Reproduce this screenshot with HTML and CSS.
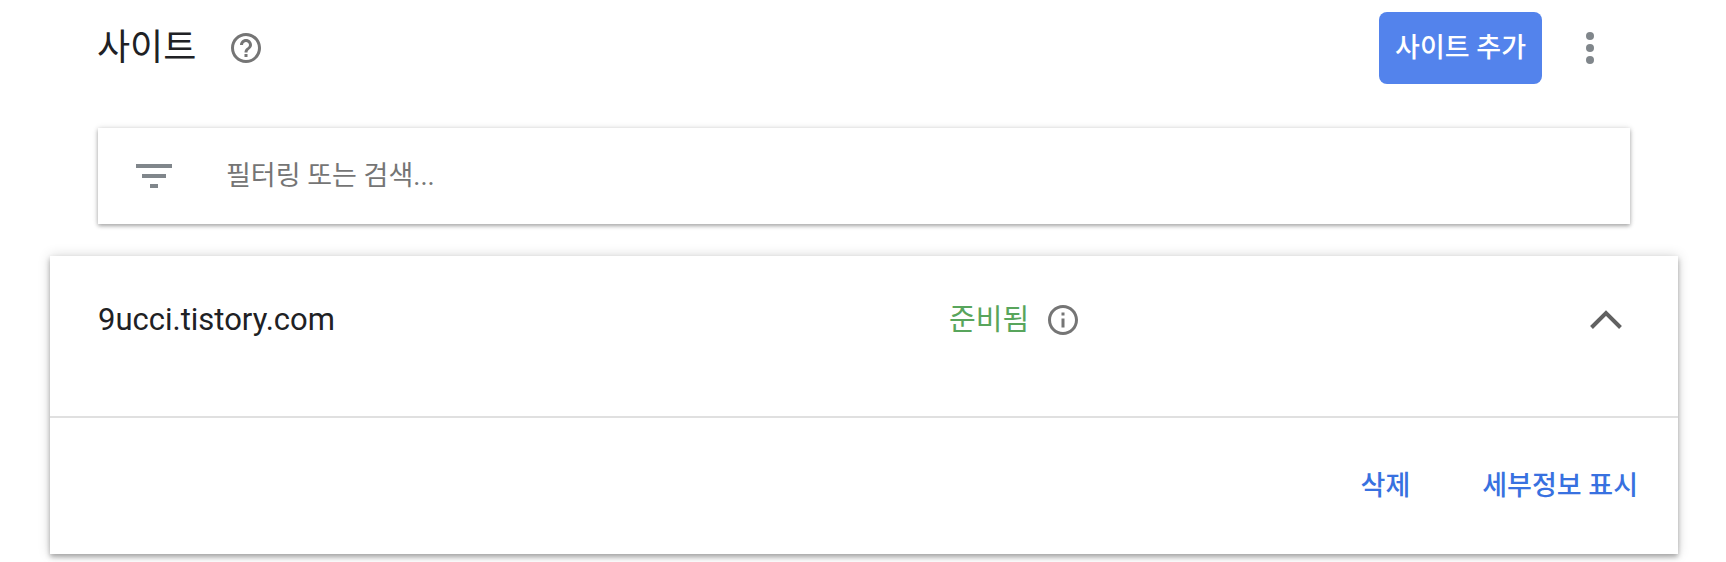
FILE: index.html
```html
<!DOCTYPE html>
<html lang="ko">
<head>
<meta charset="utf-8">
<meta name="viewport" content="width=device-width, initial-scale=1">
<title>사이트</title>
<link rel="stylesheet" href="styles.css">
</head>
<body>
<main class="page">
  <header class="header">
    <h1 class="title">사이트</h1>
    <button class="icon-button" type="button" aria-label="도움말">
      <svg class="icon icon-small" viewBox="0 0 24 24" aria-hidden="true"><path d="M11 18h2v-2h-2v2zm1-16C6.480 2 2 6.480 2 12s4.480 10 10 10 10-4.480 10-10S17.520 2 12 2zm0 18c-4.410 0-8-3.590-8-8s3.590-8 8-8 8 3.590 8 8-3.590 8-8 8zm0-14c-2.210 0-4 1.790-4 4h2c0-1.100.9-2 2-2s2 .9 2 2c0 2-3 1.750-3 5h2c0-2.250 3-2.500 3-5 0-2.210-1.790-4-4-4z"/></svg>
    </button>
    <div class="header-actions">
      <button class="add-button" type="button">사이트 추가</button>
      <button class="icon-button more" type="button" aria-label="더보기">
        <svg class="icon icon-large" viewBox="0 0 24 24" aria-hidden="true"><circle cx="12" cy="6" r="2"/><circle cx="12" cy="12" r="2"/><circle cx="12" cy="18" r="2"/></svg>
      </button>
    </div>
  </header>

  <label class="search">
    <svg class="icon icon-large more" viewBox="0 0 24 24" aria-hidden="true"><path d="M10 18h4v-2h-4v2zM3 6v2h18V6H3zm3 7h12v-2H6v2z"/></svg>
    <input class="search-input" type="text" placeholder="필터링 또는 검색..." aria-label="필터링 또는 검색">
  </label>

  <section class="card">
    <div class="site">
      <span class="domain">9ucci.tistory.com</span>
      <div class="status">
        <span class="status-text">준비됨</span>
        <button class="icon-button" type="button" aria-label="상태 정보">
          <svg class="icon icon-small" viewBox="0 0 24 24" aria-hidden="true"><path d="M11 7h2v2h-2zM11 11h2v6h-2zM12 2C6.480 2 2 6.480 2 12s4.480 10 10 10 10-4.480 10-10S17.520 2 12 2zm0 18c-4.410 0-8-3.590-8-8s3.590-8 8-8 8 3.590 8 8-3.590 8-8 8z"/></svg>
        </button>
        <button class="icon-button toggle" type="button" aria-label="접기" aria-expanded="true">
          <svg class="icon icon-large chevron" viewBox="0 0 48 48" aria-hidden="true"><path d="M9.500 31.500 24 17l14.500 14.500"/></svg>
        </button>
      </div>
    </div>
    <div class="actions">
      <button class="text-button" type="button">삭제</button>
      <button class="text-button" type="button">세부정보 표시</button>
    </div>
  </section>
</main>
</body>
</html>
```
FILE: styles.css
```css
* {
  box-sizing: border-box;
}

body {
  margin: 0;
  background: #fff;
  color: #202124;
  font-family: Roboto, "Noto Sans CJK KR", sans-serif;
  font-size: 27px;
  line-height: 36px;
}

button,
input {
  margin: 0;
  padding: 0;
  border: 0;
  background: none;
  font: inherit;
}

button {
  cursor: pointer;
}

.page {
  padding: 12px 48px 8px 50px;
}

.header {
  display: flex;
  align-items: center;
  gap: 32px;
  min-height: 72px;
  padding: 0 16px 0 47px;
}

.title {
  margin: 0;
  font-size: 36px;
  font-weight: 400;
  line-height: 48px;
}

.icon-button {
  display: flex;
  color: #757575;
}

.icon {
  display: block;
  flex: none;
  fill: currentColor;
}

.icon-small {
  width: 36px;
  height: 36px;
}

.icon-large {
  width: 48px;
  height: 48px;
}

.more {
  color: #80868b;
}

.header-actions {
  display: flex;
  align-items: center;
  gap: 24px;
  margin-left: auto;
  padding-right: 48px;
}

.add-button {
  height: 72px;
  padding: 0 16px;
  border-radius: 8px;
  background: #5383ec;
  color: #fff;
  font-weight: 500;
}

.search {
  display: flex;
  align-items: center;
  gap: 48px;
  height: 96px;
  margin: 44px 48px 32px;
  padding: 0 32px;
  background: #fff;
  box-shadow: 0 2px 4px rgba(0, 0, 0, 0.3), 0 0 6px rgba(0, 0, 0, 0.12);
}

.search-input {
  flex: 1;
  min-width: 0;
  height: 48px;
  outline: 0;
  color: #202124;
}

.search-input::placeholder {
  color: #757575;
  opacity: 1;
}

.card {
  background: #fff;
  box-shadow: 0 3px 5px rgba(0, 0, 0, 0.3), 0 0 12px rgba(0, 0, 0, 0.16);
}

.site {
  display: grid;
  grid-template-columns: 5fr 4fr;
  align-items: start;
  padding: 40px 48px 72px;
  border-bottom: 2px solid #e0e0e0;
}

.domain {
  font-size: 31px;
  line-height: 48px;
}

.status {
  display: flex;
  align-items: center;
  gap: 16px;
}

.status-text {
  color: #58a55c;
  font-size: 29px;
}

.toggle {
  margin-left: auto;
  color: #616161;
}

.chevron {
  fill: none;
  stroke: currentColor;
  stroke-width: 4;
}

.actions {
  display: flex;
  justify-content: flex-end;
  gap: 72px;
  padding: 50px 40px;
}

.text-button {
  color: #3871e0;
  font-weight: 500;
}
```
